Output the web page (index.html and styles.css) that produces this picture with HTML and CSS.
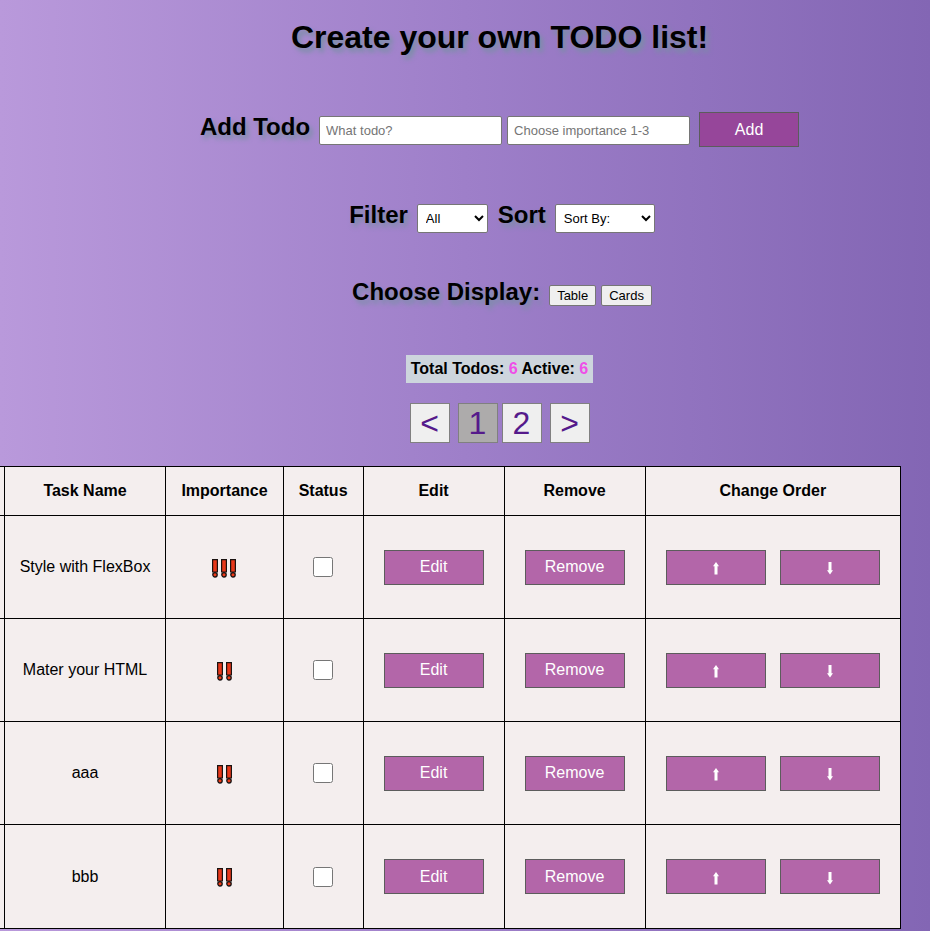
FILE: index.html
```html
<!DOCTYPE html>
<html lang="en">
<head>
<meta charset="utf-8">
<title>TODO list</title>
<link rel="stylesheet" href="styles.css">
<script src="app.js" defer></script>
</head>
<body>
<svg class="symbols" aria-hidden="true">
  <symbol id="bang" viewBox="0 0 6 19">
    <path d="M.6 .7H5.4V13H.6Z" fill="#e8381a" stroke="#1a1210" stroke-width="1.2"/>
    <circle cx="3" cy="15.8" r="2.2" fill="#f03a17" stroke="#151010" stroke-width="1.3"/>
  </symbol>
  <symbol id="up" viewBox="0 0 6 13"><path d="M3 0L6 4.2H4.5V12.5H1.5V4.2H0Z" fill="#fff"/></symbol>
  <symbol id="down" viewBox="0 0 6 13"><path d="M3 12.5L6 8.3H4.5V0H1.5V8.3H0Z" fill="#fff"/></symbol>
</svg>
<header class="panel">
  <h1>Create your own TODO list!</h1>
  <form class="row add-row">
    <h2>Add Todo</h2>
    <input type="text" placeholder="What todo?" aria-label="What todo?">
    <input type="text" placeholder="Choose importance 1-3" aria-label="Choose importance 1-3">
    <button type="button" class="btn btn-add">Add</button>
  </form>
  <div class="row filter-row">
    <h2><label for="filter">Filter</label></h2>
    <select id="filter" class="filter"><option>All</option></select>
    <h2 class="sort-title"><label for="sort">Sort</label></h2>
    <select id="sort" class="sort"><option>Sort By:</option></select>
  </div>
  <div class="row display-row">
    <h2>Choose Display:</h2>
    <button type="button" class="view">Table</button>
    <button type="button" class="view">Cards</button>
  </div>
  <p class="totals">Total Todos: <span>6</span> Active: <span>6</span></p>
  <nav class="pager" aria-label="Pages">
    <a href="#prev">&lt;</a>
    <div class="pages"><a href="#1" class="current">1</a><a href="#2">2</a></div>
    <a href="#next">&gt;</a>
  </nav>
</header>
<main class="list">
  <table>
    <thead>
      <tr><th></th><th>Task Name</th><th>Importance</th><th>Status</th><th>Edit</th><th>Remove</th><th>Change Order</th></tr>
    </thead>
    <tbody id="todos"></tbody>
  </table>
</main>
</body>
</html>
```
FILE: styles.css
```css
html {
  min-height: 100%;
  background: linear-gradient(to right, #b999db, #9e7fc9 50%, #8366b4);
}

body {
  margin: 0;
  font: 16px "Liberation Sans", Arial, sans-serif;
  color: #000;
  overflow-x: hidden;
}

.symbols {
  display: none;
}

.panel {
  display: flex;
  flex-direction: column;
  align-items: center;
  padding: 19px 0 0 69px;
}

h1,
h2 {
  margin: 0;
  text-shadow: 3px 4px 5px #7890a4;
}

h1 {
  font-size: 32px;
  line-height: 37px;
}

h2 {
  margin-right: 4px;
  font-size: 24px;
  line-height: 28px;
}

.row {
  display: flex;
  align-items: baseline;
  gap: 5px;
}

.add-row {
  margin-top: 56px;
}

.filter-row,
.display-row {
  padding-left: 5px;
}

.filter-row {
  margin-top: 54px;
}

.display-row {
  margin-top: 45px;
}

input[type="text"],
select {
  box-sizing: border-box;
  height: 29px;
  border: 1px solid #767676;
  border-radius: 2px;
  background-color: #fff;
  color: #000;
  font: 13px "Liberation Sans", Arial, sans-serif;
}

input[type="text"] {
  width: 183px;
  padding: 0 6px;
}

input::placeholder {
  color: #757575;
}

select {
  padding: 0 4px;
}

.filter {
  width: 71px;
}

.sort {
  width: 100px;
}

.sort-title {
  margin-left: 5px;
}

.btn {
  box-sizing: border-box;
  width: 100px;
  height: 35px;
  margin: 5px;
  padding: 0;
  border: 1px solid #5c5c5c;
  background: #b366a9;
  color: #fff;
  font: 16px "Liberation Sans", Arial, sans-serif;
  vertical-align: middle;
}

.btn-add {
  margin: 0 0 0 4px;
  background: #96469a;
}

.view {
  height: 21px;
  padding: 0 7px;
  border: 1px solid #767676;
  border-radius: 2px;
  background: #efefef;
  color: #000;
  font: 13px "Liberation Sans", Arial, sans-serif;
}

.totals {
  margin: 49px 0 0;
  padding: 0 5px;
  background: #cdd5dd;
  font-weight: bold;
  line-height: 28px;
}

.totals span {
  color: #ee4fe8;
}

.pager {
  display: flex;
  gap: 8px;
  margin-top: 20px;
}

.pages {
  display: flex;
  gap: 4px;
}

.pager a {
  box-sizing: border-box;
  width: 40px;
  height: 40px;
  border: 1px solid #808080;
  background: #efefef;
  color: #551a8b;
  font-size: 32px;
  line-height: 38px;
  text-align: center;
  text-decoration: none;
}

.pager .current {
  background: #adabab;
}

.list {
  display: flex;
  justify-content: flex-end;
  margin-top: 23px;
  padding-right: 29px;
  overflow: hidden;
}

table {
  flex: none;
  border-collapse: collapse;
  background: #f4eeee;
  text-align: center;
}

th,
td {
  padding: 15px;
  border: 1px solid #000;
  white-space: nowrap;
}

th {
  line-height: 18px;
}

td {
  box-sizing: border-box;
  height: 103px;
  padding-top: 0;
  padding-bottom: 0;
}

tr:last-child td {
  height: 104px;
}

.check {
  width: 20px;
  height: 20px;
  margin: 0;
  vertical-align: middle;
}

.bang {
  width: 6px;
  height: 19px;
  margin: 2px 2px 0 1px;
  vertical-align: middle;
}

.arrow {
  width: 6px;
  height: 13px;
  vertical-align: -3px;
}
```
FILE: app.js
```js
const todos = [
  { name: "Style with FlexBox", importance: 3 },
  { name: "Mater your HTML", importance: 2 },
  { name: "aaa", importance: 2 },
  { name: "bbb", importance: 2 },
];

const bang = '<svg class="bang" aria-hidden="true"><use href="#bang"/></svg>';
const arrow = (id) => `<svg class="arrow" aria-hidden="true"><use href="#${id}"/></svg>`;

document.getElementById("todos").innerHTML = todos
  .map(
    (t) => `<tr>
      <td></td>
      <td>${t.name}</td>
      <td>${bang.repeat(t.importance)}</td>
      <td><input type="checkbox" class="check" aria-label="Done: ${t.name}"></td>
      <td><button type="button" class="btn">Edit</button></td>
      <td><button type="button" class="btn">Remove</button></td>
      <td><button type="button" class="btn" aria-label="Move up">${arrow("up")}</button>
        <button type="button" class="btn" aria-label="Move down">${arrow("down")}</button></td>
    </tr>`
  )
  .join("");
```
